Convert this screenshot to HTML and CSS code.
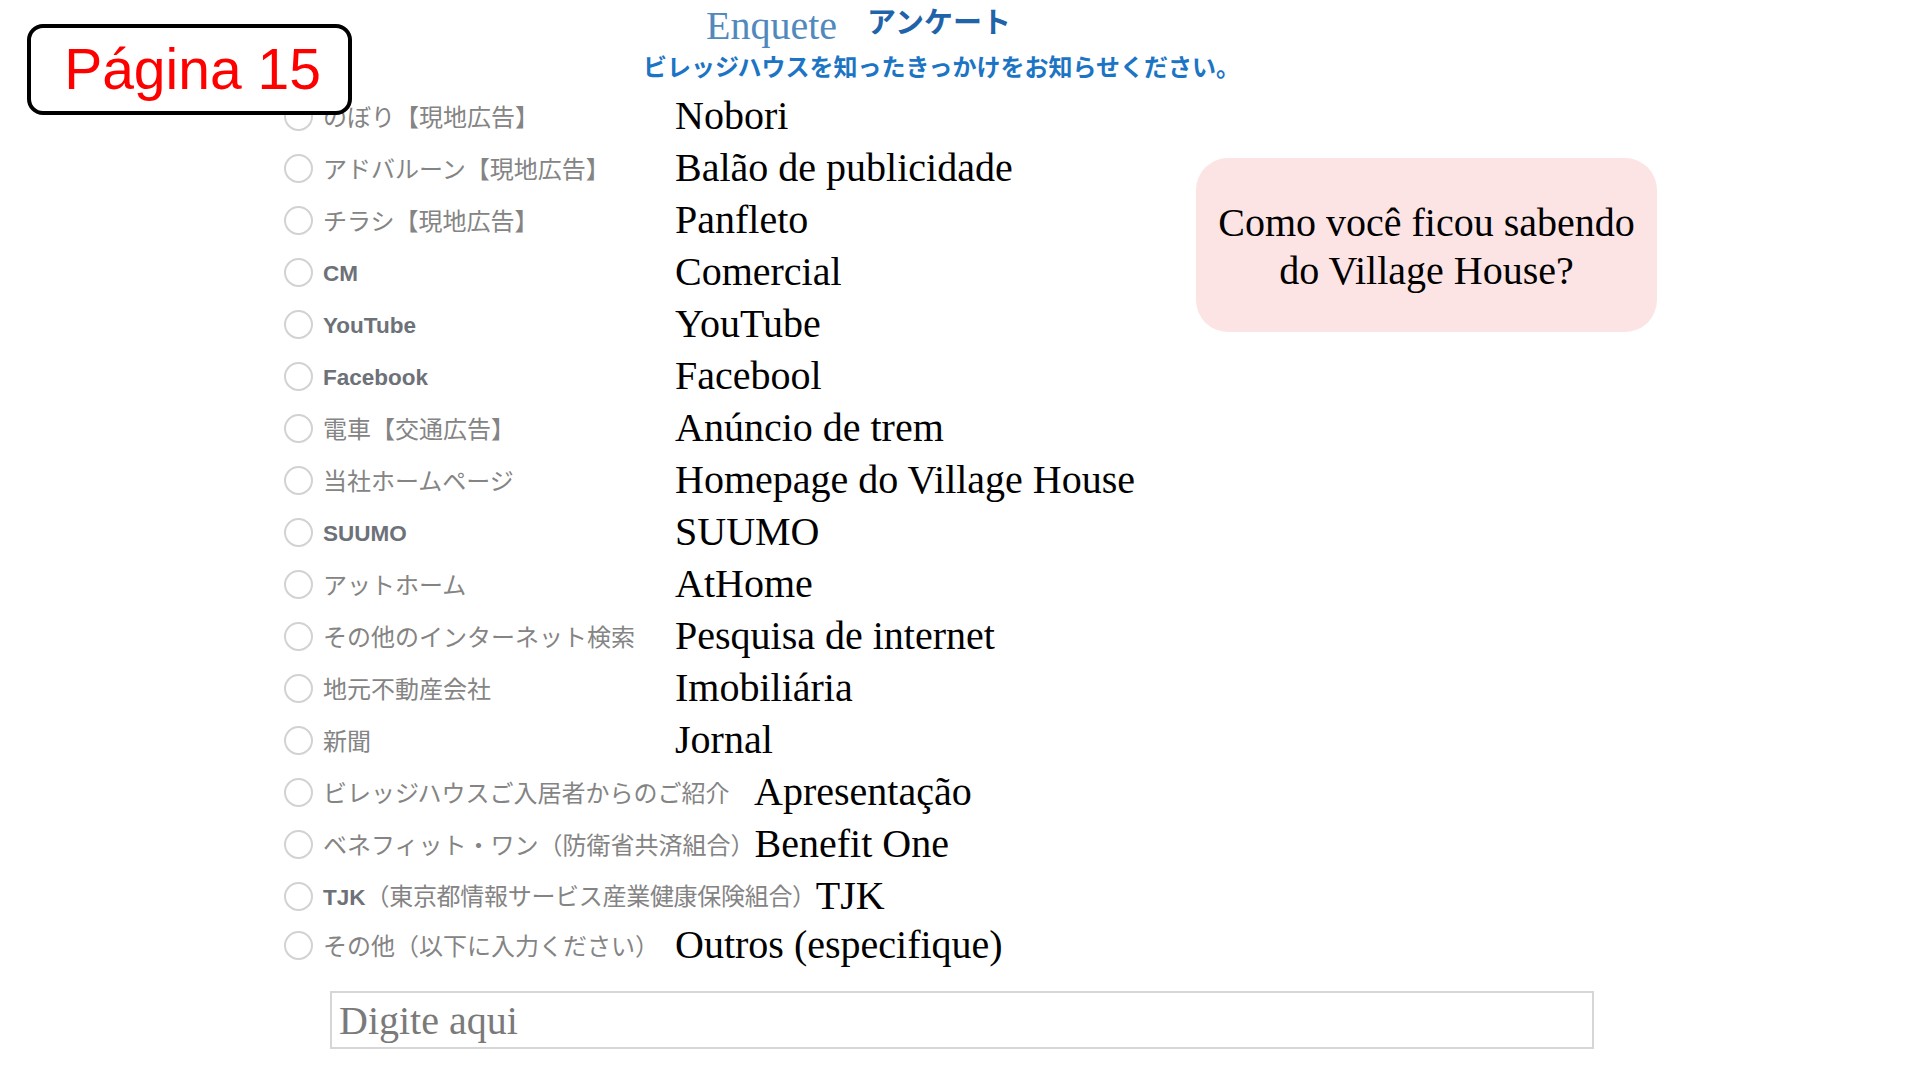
FILE: index.html
```html
<!DOCTYPE html>
<html lang="ja">
<head>
<meta charset="utf-8">
<title>Página 15</title>
<link rel="stylesheet" href="styles.css">
</head>
<body>
<div class="page">
  <div class="page-badge">Página 15</div>

  <header class="head">
    <div class="title-row">
      <span class="title-pt">Enquete</span>
      <span class="title-ja">アンケート</span>
    </div>
    <div class="subtitle">ビレッジハウスを知ったきっかけをお知らせください。</div>
  </header>

  <div class="main">
    <div class="options">
      <div class="row"><span class="radio"></span><span class="label">のぼり【現地広告】</span><span class="pt">Nobori</span></div>
      <div class="row"><span class="radio"></span><span class="label">アドバルーン【現地広告】</span><span class="pt">Balão de publicidade</span></div>
      <div class="row"><span class="radio"></span><span class="label">チラシ【現地広告】</span><span class="pt">Panfleto</span></div>
      <div class="row"><span class="radio"></span><span class="label"><b class="lat">CM</b></span><span class="pt">Comercial</span></div>
      <div class="row"><span class="radio"></span><span class="label"><b class="lat">YouTube</b></span><span class="pt">YouTube</span></div>
      <div class="row"><span class="radio"></span><span class="label"><b class="lat">Facebook</b></span><span class="pt">Facebool</span></div>
      <div class="row"><span class="radio"></span><span class="label">電車【交通広告】</span><span class="pt">Anúncio de trem</span></div>
      <div class="row"><span class="radio"></span><span class="label">当社ホームページ</span><span class="pt">Homepage do Village House</span></div>
      <div class="row"><span class="radio"></span><span class="label"><b class="lat">SUUMO</b></span><span class="pt">SUUMO</span></div>
      <div class="row"><span class="radio"></span><span class="label">アットホーム</span><span class="pt">AtHome</span></div>
      <div class="row"><span class="radio"></span><span class="label">その他のインターネット検索</span><span class="pt">Pesquisa de internet</span></div>
      <div class="row"><span class="radio"></span><span class="label">地元不動産会社</span><span class="pt">Imobiliária</span></div>
      <div class="row"><span class="radio"></span><span class="label">新聞</span><span class="pt">Jornal</span></div>
      <div class="row"><span class="radio"></span><span class="label label-wide">ビレッジハウスご入居者からのご紹介</span><span class="pt">Apresentação</span></div>
      <div class="row"><span class="radio"></span><span class="label label-wide">ベネフィット・ワン（防衛省共済組合）</span><span class="pt">Benefit One</span></div>
      <div class="row"><span class="radio"></span><span class="label label-widest"><b class="lat">TJK</b>（東京都情報サービス産業健康保険組合）</span><span class="pt">TJK</span></div>
      <div class="row row-last"><span class="radio"></span><span class="label">その他（以下に入力ください）</span><span class="pt">Outros (especifique)</span></div>
    </div>

    <div class="callout">Como você ficou sabendo<br>do Village House?</div>
  </div>

  <div class="input-wrap">
    <input class="text-input" type="text" placeholder="Digite aqui">
  </div>
</div>
</body>
</html>
```
FILE: styles.css
```css
* { box-sizing: border-box; }
html, body { margin: 0; padding: 0; background: #ffffff; }
body { width: 1920px; height: 1080px; overflow: hidden; }

.page { position: relative; width: 1920px; height: 1080px; }

.page-badge {
  position: absolute;
  left: 27px;
  top: 24px;
  width: 325px;
  height: 91px;
  border: 4px solid #000;
  border-radius: 16px;
  background: #fff;
  color: #ff0000;
  font-family: "Liberation Sans", Arial, sans-serif;
  font-size: 57px;
  line-height: 83px;
  text-align: center;
  padding-left: 6px;
  z-index: 2;
}

.head { height: 90px; }
.title-row {
  display: flex;
  align-items: flex-start;
  height: 46px;
  padding-left: 706px;
}
.title-pt {
  font-family: "Liberation Serif", "Times New Roman", serif;
  font-size: 40px;
  line-height: 40px;
  color: #5189bd;
  margin-top: 6px;
}
.title-ja {
  font-family: "Noto Sans CJK JP", sans-serif;
  font-weight: 700;
  font-size: 29px;
  line-height: 29px;
  color: #1f63a8;
  margin-left: 30px;
  margin-top: 6px;
}
.subtitle {
  margin-top: 8px;
  padding-left: 643px;
  font-family: "Noto Sans CJK JP", sans-serif;
  font-weight: 700;
  font-size: 24px;
  line-height: 24px;
  letter-spacing: 0;
  color: #1c74c4;
}

.main {
  display: flex;
  align-items: flex-start;
  padding-left: 284px;
}
.options {
  width: 912px;
  display: flex;
  flex-direction: column;
}
.row {
  display: flex;
  align-items: center;
  height: 52px;
  white-space: nowrap;
}
.row-last { margin-top: -3px; }

.radio {
  flex: 0 0 29px;
  width: 29px;
  height: 29px;
  border-radius: 50%;
  border: 2px solid #d2d2d2;
  margin-right: 10px;
}
.label {
  flex: 0 0 352px;
  font-family: "Noto Sans CJK JP", sans-serif;
  font-size: 24px;
  color: #848484;
  line-height: 52px;
}
.label-wide { flex-basis: 431px; }
.label-widest { flex-basis: 492px; letter-spacing: -0.3px; }
.lat {
  font-family: "Liberation Sans", Arial, sans-serif;
  font-weight: 700;
  font-size: 22.5px;
  color: #6d7178;
  letter-spacing: 0;
}
.pt {
  font-family: "Liberation Serif", "Times New Roman", serif;
  font-size: 40px;
  line-height: 52px;
  color: #000;
  letter-spacing: 0;
}

.callout {
  margin-top: 68px;
  width: 461px;
  height: 174px;
  padding-top: 4px;
  border-radius: 32px;
  background: #fde4e4;
  display: flex;
  align-items: center;
  justify-content: center;
  text-align: center;
  font-family: "Liberation Serif", "Times New Roman", serif;
  font-size: 40px;
  line-height: 48px;
  color: #000;
}

.input-wrap {
  margin-top: 20px;
  padding-left: 330px;
}
.text-input {
  display: block;
  width: 1264px;
  height: 58px;
  border: 2px solid #d6d6d6;
  border-radius: 0;
  padding: 0 0 0 7px;
  font-family: "Liberation Serif", "Times New Roman", serif;
  font-size: 40px;
  color: #333;
  background: #fff;
  outline: none;
}
.text-input::placeholder { color: #7a7a7a; opacity: 1; }
```
